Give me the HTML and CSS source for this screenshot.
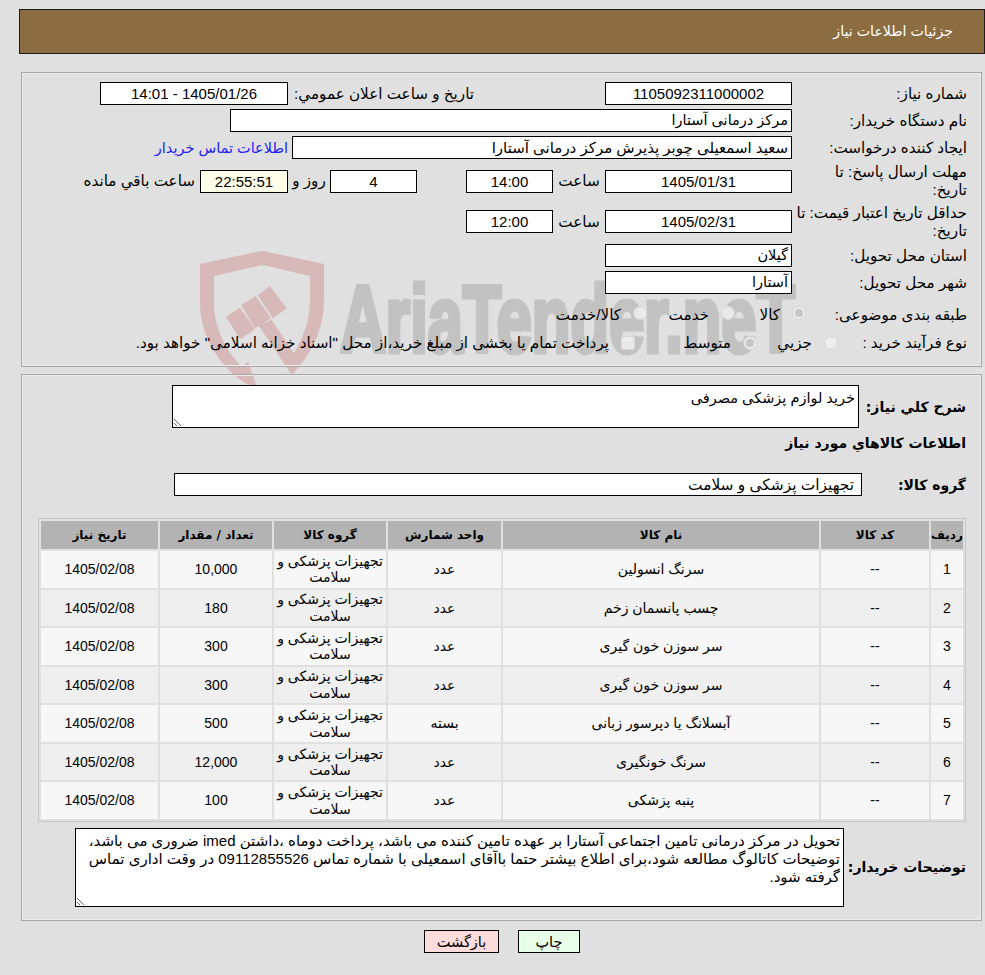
FILE: index.html
```html
<!DOCTYPE html>
<html lang="fa" dir="rtl">
<head>
<meta charset="utf-8">
<title>جزئیات اطلاعات نیاز</title>
<link rel="stylesheet" href="styles.css">
</head>
<body>
<div class="watermark" aria-hidden="true">
  <svg class="wm-shield" viewBox="0 0 450 450" width="150" height="150">
    <path d="M217 32 L402 72 V180 C402 270 360 350 305 405 L205 255 L245 240 L312 340 C340 290 360 240 360 180 V108 L217 75 L72 108 V190 C72 260 105 330 155 380 L175 365 L200 440 L165 430 C90 380 30 290 30 190 V72 Z"/>
    <path d="M240 138 L290 205 L248 235 L203 165 Z"/>
    <path d="M153 195 L197 168 L243 235 L195 265 Z"/>
    <path d="M108 230 L150 203 L195 268 L150 298 Z"/>
  </svg>
  <svg class="wm-text" viewBox="0 0 470 120" width="470" height="120">
    <text x="0" y="90" textLength="455" lengthAdjust="spacingAndGlyphs">AriaTender.neT</text>
  </svg>
</div>

<header class="title-bar">جزئیات اطلاعات نیاز</header>

<section class="panel panel-info">
  <div class="form-grid">
    <div class="lbl">شماره نیاز:</div>
    <div class="fld c2">1105092311000002</div>
    <div class="lbl-free pub-label">تاریخ و ساعت اعلان عمومي:</div>
    <div class="fld pub-value">1405/01/26 - 14:01</div>

    <div class="lbl">نام دستگاه خریدار:</div>
    <div class="fld text buyer">مرکز درمانی آستارا</div>

    <div class="lbl">ایجاد کننده درخواست:</div>
    <div class="fld text creator">سعید اسمعیلی چوبر پذیرش مرکز درمانی آستارا</div>
    <a class="contact" href="#">اطلاعات تماس خریدار</a>

    <div class="lbl">مهلت ارسال پاسخ: تا<br>تاریخ:</div>
    <div class="fld c2">1405/01/31</div>
    <div class="unit">ساعت</div>
    <div class="fld">14:00</div>
    <div class="spacer"></div>
    <div class="fld">4</div>
    <div class="unit">روز و</div>
    <div class="fld timer">22:55:51</div>
    <div class="remain">ساعت باقي مانده</div>

    <div class="lbl">حداقل تاریخ اعتبار قیمت: تا<br>تاریخ:</div>
    <div class="fld c2">1405/02/31</div>
    <div class="unit">ساعت</div>
    <div class="fld">12:00</div>

    <div class="lbl">استان محل تحویل:</div>
    <div class="fld text c2">گیلان</div>

    <div class="lbl">شهر محل تحویل:</div>
    <div class="fld text c2">آستارا</div>

    <div class="opt-row opt-row-subject">
      <div class="opt-label">طبقه بندی موضوعی:</div>
      <div class="opt w71"><span class="radio on"></span>کالا</div>
      <div class="opt w88"><span class="radio"></span>خدمت</div>
      <div class="opt"><span class="radio"></span>کالا/خدمت</div>
    </div>

    <div class="opt-row opt-row-process">
      <div class="opt-label">نوع فرآیند خرید :</div>
      <div class="opt w81"><span class="radio"></span>جزیي</div>
      <div class="opt w122"><span class="radio on"></span>متوسط</div>
      <div class="opt"><span class="check"></span>پرداخت تمام یا بخشی از مبلغ خرید،از محل "اسناد خزانه اسلامی" خواهد بود.</div>
    </div>
  </div>
</section>

<section class="panel panel-items">
  <div class="line line-desc">
    <div class="lbl-bold w-desc">شرح کلي نیاز:</div>
    <textarea class="area area-desc" readonly>خرید لوازم پزشکی مصرفی</textarea>
  </div>
  <h2 class="items-title">اطلاعات کالاهاي مورد نیاز</h2>
  <div class="line line-group">
    <div class="lbl-bold w-group">گروه کالا:</div>
    <div class="fld text group-value">تجهیزات پزشکی و سلامت</div>
  </div>

  <table class="items">
    <colgroup>
      <col class="col-a"><col class="col-b"><col class="col-c"><col class="col-d"><col class="col-e"><col class="col-f"><col class="col-g">
    </colgroup>
    <thead>
      <tr><th>ردیف</th><th>کد کالا</th><th>نام کالا</th><th>واحد شمارش</th><th>گروه کالا</th><th>تعداد / مقدار</th><th>تاریخ نیاز</th></tr>
    </thead>
    <tbody>
      <tr><td>1</td><td>--</td><td>سرنگ انسولین</td><td>عدد</td><td>تجهیزات پزشکی و سلامت</td><td>10,000</td><td>1405/02/08</td></tr>
      <tr><td>2</td><td>--</td><td>چسب پانسمان زخم</td><td>عدد</td><td>تجهیزات پزشکی و سلامت</td><td>180</td><td>1405/02/08</td></tr>
      <tr><td>3</td><td>--</td><td>سر سوزن خون گیری</td><td>عدد</td><td>تجهیزات پزشکی و سلامت</td><td>300</td><td>1405/02/08</td></tr>
      <tr><td>4</td><td>--</td><td>سر سوزن خون گیری</td><td>عدد</td><td>تجهیزات پزشکی و سلامت</td><td>300</td><td>1405/02/08</td></tr>
      <tr><td>5</td><td>--</td><td>آبسلانگ یا دپرسور زبانی</td><td>بسته</td><td>تجهیزات پزشکی و سلامت</td><td>500</td><td>1405/02/08</td></tr>
      <tr><td>6</td><td>--</td><td>سرنگ خونگیری</td><td>عدد</td><td>تجهیزات پزشکی و سلامت</td><td>12,000</td><td>1405/02/08</td></tr>
      <tr><td>7</td><td>--</td><td>پنبه پزشکی</td><td>عدد</td><td>تجهیزات پزشکی و سلامت</td><td>100</td><td>1405/02/08</td></tr>
    </tbody>
  </table>

  <div class="line line-notes">
    <div class="lbl-bold w-notes">توضیحات خریدار:</div>
    <textarea class="area area-notes" readonly>تحویل در مرکز درمانی تامین اجتماعی آستارا بر عهده تامین کننده می باشد، پرداخت دوماه ،داشتن imed ضروری می باشد، توضیحات کاتالوگ مطالعه شود،برای اطلاع بیشتر حتما باآقای اسمعیلی با شماره تماس 09112855526 در وقت اداری تماس گرفته شود.</textarea>
  </div>
</section>

<div class="actions">
  <button class="btn btn-print" type="button">چاپ</button>
  <button class="btn btn-back" type="button">بازگشت</button>
</div>
</body>
</html>
```

FILE: styles.css
```css
* { box-sizing: border-box; }

html, body { height: 100%; }

body {
  margin: 0;
  padding: 9px 0 0 19px;
  background: #e0e0e0;
  color: #000;
  font: 15.2px/18px "Liberation Sans", "DejaVu Sans", sans-serif;
  overflow: hidden;
}

.watermark {
  position: absolute;
  left: 0;
  top: 0;
  width: 0;
  height: 0;
  z-index: 0;
}

.wm-shield {
  position: absolute;
  left: 190px;
  top: 240px;
  fill: #d8b9b9;
}

.wm-text {
  position: absolute;
  left: 340px;
  top: 262px;
  direction: ltr;
  fill: #c2c2c2;
  stroke: #c2c2c2;
  stroke-width: 5px;
  font: bold 94px "Liberation Sans", sans-serif;
}

.title-bar {
  position: relative;
  z-index: 1;
  height: 45px;
  padding: 0 31px 0 0;
  background: #8c6d42;
  border: 1px solid #1c1c1c;
  color: #fff;
  font-size: 14.2px;
  line-height: 42px;
}

.panel {
  position: relative;
  z-index: 1;
  margin-right: 3px;
  width: 961px;
  border: 1px solid #a6a6a6;
  box-shadow: inset 0 0 0 1px #ececec;
}

.panel-info {
  margin-top: 18px;
  height: 295px;
  padding: 9px 14px 0 0;
}

.panel-items {
  margin-top: 7px;
  height: 547px;
  padding: 10px 15px 0 0;
}

.form-grid {
  display: grid;
  grid-template-columns: 175px 187px 52px 87px 49px 87px 42px 88px 100px 1fr;
  grid-template-rows: 23px 23px 23px 36px 37px 23px 23px 28px 26px;
  row-gap: 4px;
}

.lbl {
  grid-column: 1;
  align-self: center;
  white-space: nowrap;
}

.lbl-free { white-space: nowrap; align-self: center; }

.pub-label {
  grid-column: 3 / 8;
  padding-right: 131px;
}

.pub-value { grid-column: 8 / 10; }

.fld {
  height: 23px;
  align-self: center;
  background: #fff;
  border: 1px solid #000;
  text-align: center;
  font-size: 15px;
  line-height: 21px;
  white-space: nowrap;
  overflow: hidden;
}

.fld.text {
  text-align: right;
  padding-right: 3px;
  font-size: 14.5px;
}

.c2 { grid-column: 2; }
.buyer { grid-column: 2 / 9; margin-left: 30px; }
.fld.creator { grid-column: 2 / 8; margin-left: 4px; font-size: 15px; }
.contact { grid-column: 8 / -1; color: #2222ee; font-size: 14.5px; text-decoration: none; align-self: center; white-space: nowrap; }

.unit { text-align: center; align-self: center; white-space: nowrap; }
.spacer { min-width: 0; }
.timer { background: #ffffe9; }
.remain { grid-column: 9 / -1; padding-right: 5px; align-self: center; white-space: nowrap; }

.opt-row {
  grid-column: 1 / -1;
  display: flex;
  align-items: center;
}

.opt-row-subject { padding-top: 5px; }
.opt-row-subject .radio { margin-bottom: 4px; }
.opt-row-subject .opt-label { width: 161px; }
.opt-row-process .opt-label { width: 129px; }

.opt {
  display: flex;
  align-items: center;
  gap: 12px;
  white-space: nowrap;
}

.w71 { width: 71px; }
.w88 { width: 88px; }
.w81 { width: 81px; }
.w122 { width: 122px; }

.radio, .check {
  flex: none;
  width: 14px;
  height: 14px;
  background: rgba(238, 238, 238, .85);
  border: 1px solid #d6d6d6;
}

.radio { border-radius: 50%; position: relative; }

.radio.on::after {
  content: "";
  position: absolute;
  inset: 2px;
  border-radius: 50%;
  background: #c6c6c6;
}

.check { border-radius: 2px; }

.line { display: flex; align-items: center; }
.lbl-bold { flex: none; font-weight: bold; font-size: 14px; font-family: "DejaVu Sans", sans-serif; }
.w-desc { width: 107px; }
.w-group { width: 104px; }
.w-notes { width: 122px; }

.area {
  display: block;
  flex: none;
  margin: 0;
  padding: 3px;
  background: #fff;
  border: 1px solid #000;
  border-radius: 0;
  color: #000;
  font: 15px/18px "Liberation Sans", "DejaVu Sans", sans-serif;
  direction: rtl;
  outline: none;
}

.area-desc { width: 687px; height: 43px; font-size: 14.5px; }
.area-notes { width: 769px; height: 79px; }

.items-title {
  margin: 0;
  height: 30px;
  padding-top: 5px;
  font-size: 14px;
  line-height: 20px;
  font-weight: bold;
  font-family: "DejaVu Sans", sans-serif;
}

.line-group { margin-top: 15px; }
.fld.group-value { width: 688px; padding-right: 7px; font-size: 15.4px; }

.items {
  margin: 22px 0 0;
  width: 928px;
  table-layout: fixed;
  border: 1px solid #c6c6c6;
  border-collapse: separate;
  border-spacing: 2px;
}

.col-a { width: 32px; }
.col-b { width: 108px; }
.col-c { width: 316px; }
.col-d { width: 113px; }
.col-e { width: 112px; }
.col-f { width: 112px; }
.col-g { width: 117px; }

.items th {
  height: 28px;
  padding: 0;
  background: #b3b3b3;
  font-family: "DejaVu Sans", sans-serif;
  font-size: 12px;
  line-height: 16px;
  font-weight: bold;
}

.items td {
  height: 36.57px;
  padding: 0 3px;
  text-align: center;
  font-size: 14px;
  line-height: 16.5px;
}

.items tbody tr:nth-child(odd) td { background: #f7f7f7; }
.items tbody tr:nth-child(even) td { background: #efefef; }

.line-notes { margin-top: 6px; }

.actions {
  position: relative;
  z-index: 1;
  display: flex;
  justify-content: center;
  gap: 19px;
  margin-top: 9px;
}

.btn {
  height: 23px;
  padding: 0;
  border: 1px solid #000;
  color: #000;
  font: 14.5px/20px "Liberation Sans", "DejaVu Sans", sans-serif;
}

.btn-print { width: 62px; background: #e8ffe8; }
.btn-back { width: 75px; background: #ffdcdc; }
```
